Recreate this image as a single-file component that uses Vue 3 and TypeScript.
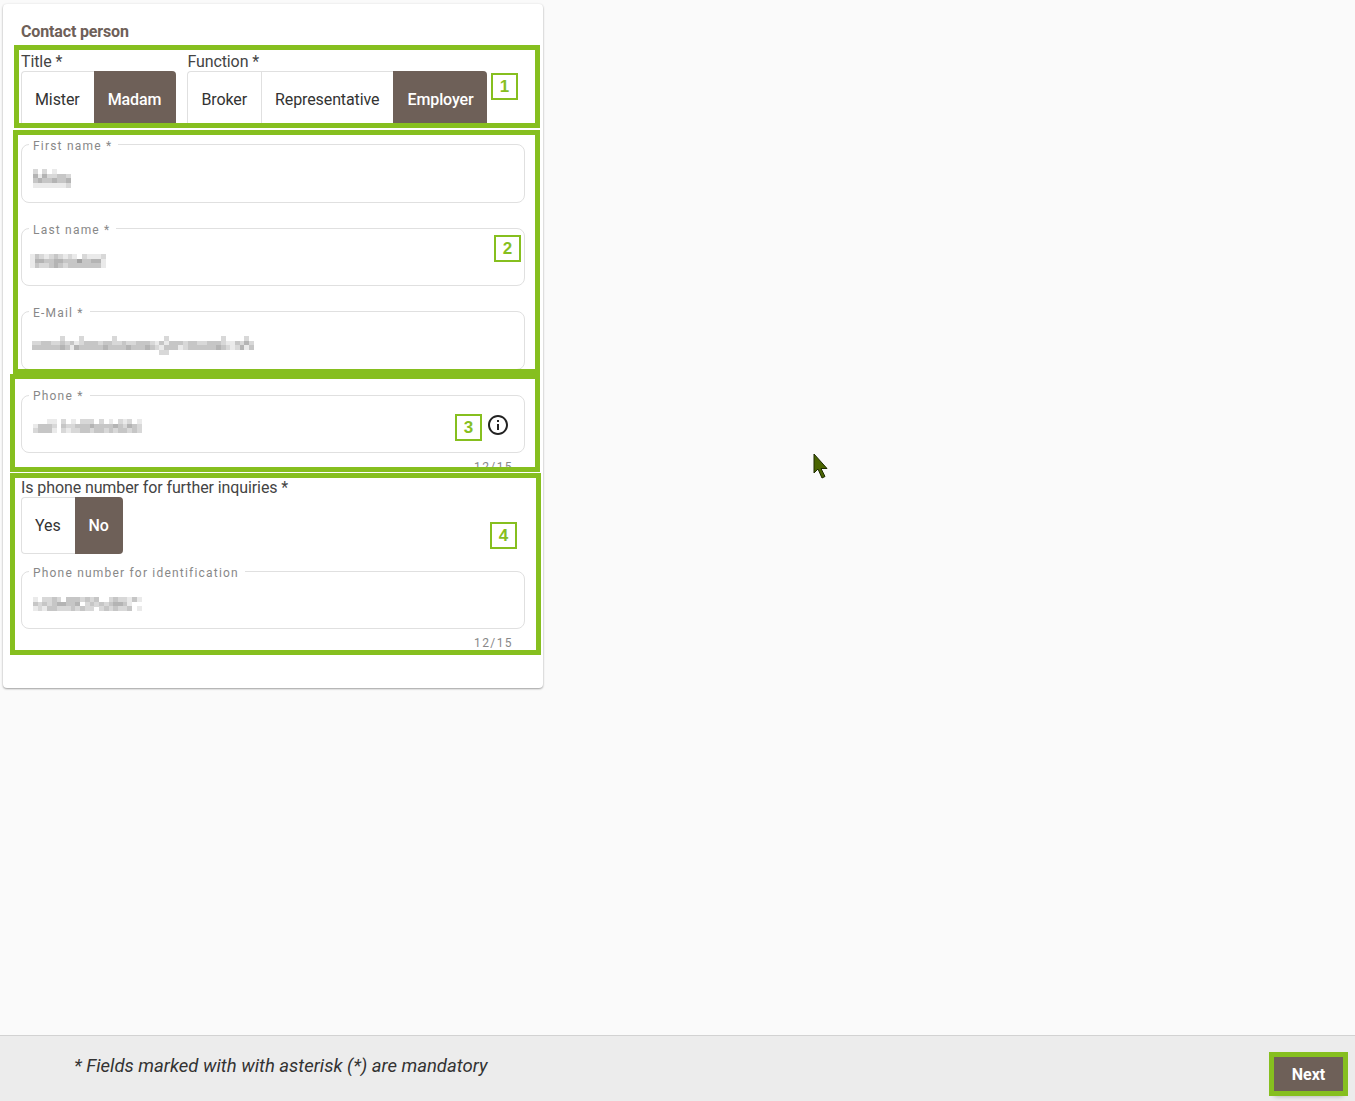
<template>
  <div class="page">
    <main class="content">
      <section class="card">
        <h2 class="card__title">Contact person</h2>

        <div class="choices">
          <div v-for="group in topGroups" :key="group.label" class="choice">
            <span class="choice__label">{{ group.label }}</span>
            <div class="toggle">
              <span
                v-for="option in group.options"
                :key="option"
                class="toggle__item"
                :class="{ 'toggle__item--on': option === group.selected }"
              >{{ option }}</span>
            </div>
          </div>
        </div>

        <div class="fields fields--names">
          <div v-for="field in nameFields" :key="field.label" class="field">
            <span class="field__label">{{ field.label }}</span>
            <svg class="blur" :style="blurStyle(field.blur)" :width="field.blur.width" height="24" shape-rendering="crispEdges">
              <rect
                v-for="cell in cells(field.blur.rows)"
                :key="cell.key"
                :x="cell.x"
                :y="cell.y"
                width="4.8"
                height="4.8"
                :fill="cell.fill"
              />
            </svg>
          </div>
        </div>

        <div class="field field--phone">
          <span class="field__label">Phone *</span>
          <svg class="blur" :style="blurStyle(phoneBlur)" :width="phoneBlur.width" height="24" shape-rendering="crispEdges">
            <rect
              v-for="cell in cells(phoneBlur.rows)"
              :key="cell.key"
              :x="cell.x"
              :y="cell.y"
              width="4.8"
              height="4.8"
              :fill="cell.fill"
            />
          </svg>
          <svg class="field__info" width="24" height="24" viewBox="0 0 24 24">
            <path
              fill="#222"
              d="M11 7h2v2h-2zm0 4h2v6h-2zm1-9C6.48 2 2 6.48 2 12s4.48 10 10 10 10-4.48 10-10S17.52 2 12 2zm0 18c-4.41 0-8-3.59-8-8s3.59-8 8-8 8 3.59 8 8-3.59 8-8 8z"
            />
          </svg>
        </div>
        <div class="counter">12/15</div>

        <div class="choice choice--inquiries">
          <span class="choice__label">Is phone number for further inquiries *</span>
          <div class="toggle">
            <span class="toggle__item">Yes</span>
            <span class="toggle__item toggle__item--on">No</span>
          </div>
        </div>

        <div class="field field--ident">
          <span class="field__label">Phone number for identification</span>
          <svg class="blur" :style="blurStyle(identBlur)" :width="identBlur.width" height="24" shape-rendering="crispEdges">
            <rect
              v-for="cell in cells(identBlur.rows)"
              :key="cell.key"
              :x="cell.x"
              :y="cell.y"
              width="4.8"
              height="4.8"
              :fill="cell.fill"
            />
          </svg>
        </div>
        <div class="counter">12/15</div>
      </section>
    </main>

    <footer class="footer">
      <em class="footer__note">* Fields marked with with asterisk (*) are mandatory</em>
      <button type="button" class="footer__next">Next</button>
    </footer>

    <!-- annotations drawn over the screenshot -->
    <div
      v-for="frame in frames"
      :key="frame.id"
      class="frame"
      :style="{ left: `${frame.x}px`, top: `${frame.y}px`, width: `${frame.w}px`, height: `${frame.h}px` }"
    />
    <div
      v-for="tag in tags"
      :key="tag.n"
      class="tag"
      :style="{ left: `${tag.x}px`, top: `${tag.y}px` }"
    >{{ tag.n }}</div>

    <svg class="pointer" width="16" height="26" viewBox="0 0 16 26">
      <path d="M1 1v19l4-4 4 9 3-1.5-4-8h6z" fill="#4a6400" stroke="#1c2a00" stroke-width="1" />
    </svg>
  </div>
</template>

<script setup lang="ts">
type Blur = { width: number; dx: number; dy: number; rows: string[] }

const CELL = 4.72

const topGroups = [
  { label: 'Title *', options: ['Mister', 'Madam'], selected: 'Madam' },
  { label: 'Function *', options: ['Broker', 'Representative', 'Employer'], selected: 'Employer' },
]

const nameFields: { label: string; blur: Blur }[] = [
  {
    label: 'First name *',
    blur: { width: 42, dx: 1, dy: 0, rows: ['2.2.1...', '41422332', '34334334', '11111112'] },
  },
  {
    label: 'Last name *',
    blur: { width: 78, dx: -2, dy: 1, rows: ['1321232121.21112', '1443344333533441', '1322343233333331'] },
  },
  {
    label: 'E-Mail *',
    blur: {
      width: 224,
      dx: 0,
      dy: 0,
      rows: [
        '......2...2......2..........2...........2....2.',
        '22332232312333233223223332131333233223332113242',
        '33333343143333343333433343213331233333343212413',
        '...........................22..................',
      ],
    },
  },
]
const phoneBlur: Blur = {
  width: 112,
  dx: 1,
  dy: -1,
  rows: ['...11.2.1.222.2.1.212.1', '13332.32233343333432432', '23331.21223323323233232', '.......................'],
}
const identBlur: Blur = {
  width: 112,
  dx: 1,
  dy: 1,
  rows: ['1.2232.3332323..2322131', '3232344334.2323234431..', '1213322232322.2323223.1', '.......................'],
}

const frames = [
  { id: 1, x: 14, y: 45, w: 526, h: 83 },
  { id: 2, x: 13, y: 130, w: 527, h: 244 },
  { id: 3, x: 10, y: 374, w: 530, h: 98 },
  { id: 4, x: 10, y: 473, w: 531, h: 182 },
  { id: 5, x: 1269, y: 1052, w: 79, h: 44 },
]

const tags = [
  { n: 1, x: 491, y: 73 },
  { n: 2, x: 494, y: 235 },
  { n: 3, x: 455, y: 414 },
  { n: 4, x: 490, y: 522 },
]

// pixelated placeholder for the values that are blurred out in the reference
function cells(rows: string[]) {
  const out: { key: string; x: number; y: number; fill: string }[] = []
  rows.forEach((row, r) => {
    row.split('').forEach((ch, c) => {
      if (ch === '.') return
      const grey = 252 - Number(ch) * 18
      out.push({ key: `${r}-${c}`, x: c * CELL, y: r * CELL, fill: `rgb(${grey},${grey},${grey})` })
    })
  })
  return out
}

function blurStyle(blur: Blur) {
  return { marginLeft: `${blur.dx}px`, marginTop: `${blur.dy}px` }
}
</script>

<style>
html,
body {
  background: #fafafa;
}
</style>

<style scoped>
.page {
  position: relative;
  display: flex;
  flex-direction: column;
  min-height: 100vh;
  overflow: hidden;
  font-family: Roboto, "Liberation Sans", sans-serif;
  font-size: 16px;
  color: #333;
}

.content {
  flex: 1;
  padding: 4px 3px;
}

.card {
  box-sizing: border-box;
  width: 540px;
  height: 684px;
  padding: 18px;
  background: #fff;
  border-radius: 4px;
  box-shadow: 0 1px 2px rgba(0, 0, 0, 0.35), 0 0 3px rgba(0, 0, 0, 0.06);
}

.card__title {
  margin: 0;
  font-size: 16px;
  line-height: 19px;
  font-weight: 700;
  letter-spacing: -0.15px;
  color: #6e6058;
}

.choices {
  display: flex;
  gap: 11px;
  margin-top: 11px;
}

.choice {
  display: flex;
  flex-direction: column;
}

.choice__label {
  height: 19px;
  line-height: 19px;
  letter-spacing: -0.1px;
  color: #444;
}

.toggle {
  display: flex;
  height: 57px;
  border: 1px solid #e0e0e0;
  border-right: 0;
  border-radius: 4px;
  box-sizing: border-box;
  letter-spacing: -0.1px;
}

.toggle__item {
  display: flex;
  align-items: center;
  padding: 0 14px 0 13px;
  color: #333;
  border-left: 1px solid #e0e0e0;
}

.toggle__item:first-child {
  border-left: 0;
}

.toggle__item--on {
  margin: -1px 0;
  padding: 0 14px;
  border-left: 0;
  border-radius: 0 4px 4px 0;
  background: #6e6058;
  color: #fff;
  font-weight: 500;
}

.choice:first-child .toggle__item--on {
  padding-right: 15px;
}

.choice + .choice .toggle__item--on {
  padding-right: 13px;
}

.fields {
  display: flex;
  flex-direction: column;
  gap: 25px;
}

.fields--names {
  margin-top: 16px;
}

.field {
  position: relative;
  box-sizing: border-box;
  display: flex;
  align-items: flex-start;
  height: 58.5px;
  padding: 24px 10px 0;
  border: 1px solid #e0e0e0;
  border-radius: 8px;
}

.field__label {
  position: absolute;
  left: 7px;
  top: -6px;
  padding: 0 6px 0 4px;
  background: #fff;
  font-size: 12px;
  line-height: 14px;
  letter-spacing: 1.2px;
  color: #888;
  white-space: nowrap;
}

.field__info {
  position: absolute;
  right: 14px;
  top: 17px;
}

.field--phone {
  margin-top: 25px;
}

.field--phone .field__label {
  top: -7px;
}

.field--ident {
  margin-top: 17px;
}

.blur {
  display: block;
}

.counter {
  height: 14px;
  margin-top: 6.5px;
  padding-right: 12px;
  font-size: 12px;
  line-height: 14px;
  letter-spacing: 1.4px;
  color: #888;
  text-align: right;
}

.choice--inquiries {
  align-items: flex-start;
  margin-top: 4px;
}

.footer {
  box-sizing: border-box;
  display: flex;
  align-items: center;
  justify-content: space-between;
  height: 66px;
  padding: 0 12px 6px 74px;
  background: #ececec;
  border-top: 1px solid #d2d2d2;
}

.footer__note {
  font-size: 18.5px;
  color: #333;
}

.footer__next {
  align-self: flex-end;
  width: 69px;
  height: 38px;
  margin-bottom: 2px;
  border: 0;
  border-radius: 2px;
  background: #6e6058;
  color: #fff;
  font: 700 16px Roboto, "Liberation Sans", sans-serif;
  box-shadow: 0 3px 5px rgba(0, 0, 0, 0.3);
}

.frame {
  position: absolute;
  box-sizing: border-box;
  border: 5px solid #86bf1f;
}

.tag {
  position: absolute;
  box-sizing: border-box;
  width: 27px;
  height: 27px;
  border: 2.5px solid #86bf1f;
  background: #fff;
  color: #86bf1f;
  font: 700 17px/23px "Liberation Sans", sans-serif;
  text-align: center;
}

.pointer {
  position: absolute;
  left: 813px;
  top: 453px;
}
</style>
